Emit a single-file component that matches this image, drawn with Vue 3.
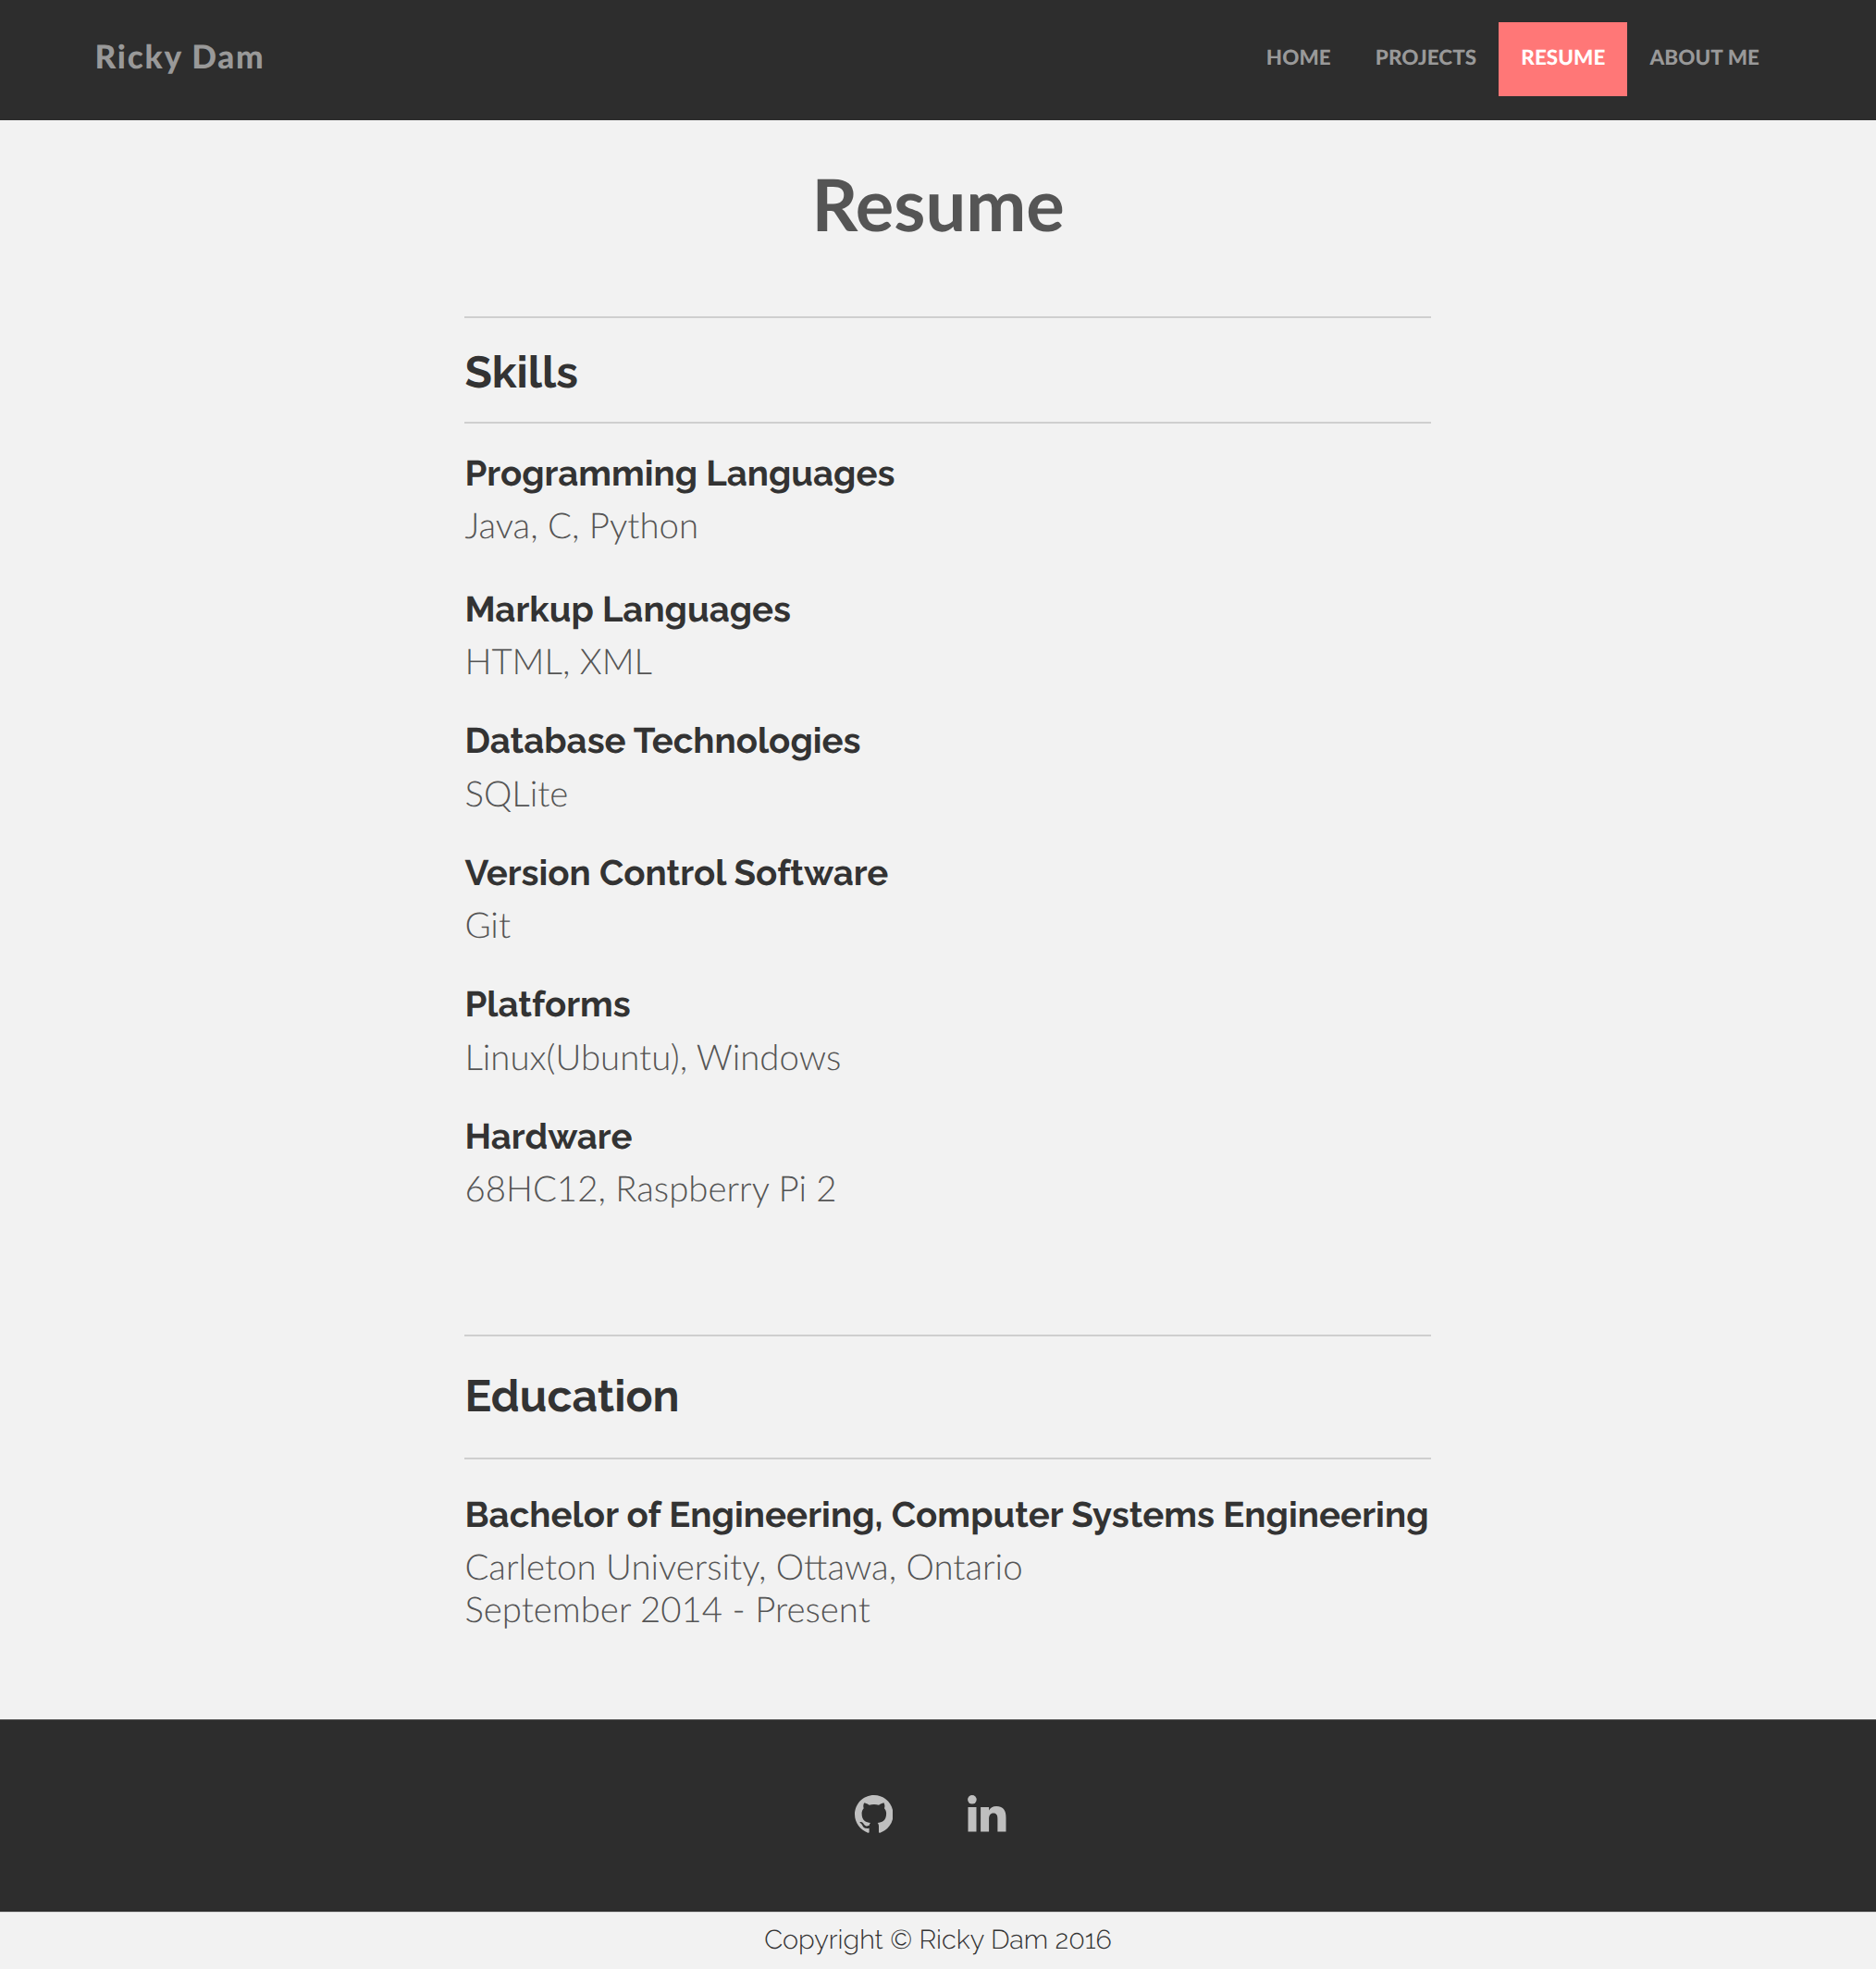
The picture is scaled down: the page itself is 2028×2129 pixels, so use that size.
<script setup>
const links = ['HOME', 'PROJECTS', 'RESUME', 'ABOUT ME']
const current = 'RESUME'
const skills = [
  { title: 'Programming Languages', detail: 'Java, C, Python' },
  { title: 'Markup Languages', detail: 'HTML, XML' },
  { title: 'Database Technologies', detail: 'SQLite' },
  { title: 'Version Control Software', detail: 'Git' },
  { title: 'Platforms', detail: 'Linux(Ubuntu), Windows' },
  { title: 'Hardware', detail: '68HC12, Raspberry Pi 2' },
]
</script>

<template>
  <div class="page">
    <header class="header">
      <a class="brand">Ricky Dam</a>
      <nav class="nav">
        <a v-for="link in links" :key="link" class="nav-link" :class="{ active: link === current }">{{ link }}</a>
      </nav>
    </header>

    <main class="content">
      <h1>Resume</h1>
      <section class="skills">
        <h2>Skills</h2>
        <div v-for="skill in skills" :key="skill.title" class="entry">
          <h3>{{ skill.title }}</h3>
          <p>{{ skill.detail }}</p>
        </div>
      </section>
      <section class="education">
        <h2>Education</h2>
        <div class="entry">
          <h3>Bachelor of Engineering, Computer Systems Engineering</h3>
          <p>Carleton University, Ottawa, Ontario<br />September 2014 - Present</p>
        </div>
      </section>
    </main>

    <footer>
      <div class="social">
        <a aria-label="GitHub">
          <svg class="github" viewBox="0 0 16 15.6" preserveAspectRatio="none">
            <path d="M8 0C3.58 0 0 3.58 0 8c0 3.54 2.29 6.53 5.47 7.59.4.07.55-.17.55-.38 0-.19-.01-.82-.01-1.49-2.01.37-2.53-.49-2.69-.94-.09-.23-.48-.94-.82-1.13-.28-.15-.68-.52-.01-.53.63-.01 1.08.58 1.23.82.72 1.21 1.87.87 2.33.66.07-.52.28-.87.51-1.07-1.78-.2-3.64-.89-3.64-3.95 0-.87.31-1.59.82-2.15-.08-.2-.36-1.02.08-2.12 0 0 .67-.21 2.2.82.64-.18 1.32-.27 2-.27s1.36.09 2 .27c1.53-1.04 2.2-.82 2.2-.82.44 1.1.16 1.92.08 2.12.51.56.82 1.27.82 2.15 0 3.07-1.87 3.75-3.65 3.95.29.25.54.73.54 1.48 0 1.07-.01 1.93-.01 2.2 0 .21.15.46.55.38A8.01 8.01 0 0 0 16 8c0-4.42-3.58-8-8-8z" />
          </svg>
        </a>
        <a aria-label="LinkedIn">
          <svg class="linkedin" viewBox="0 0 41.6 39.4">
            <circle cx="4.9" cy="4.8" r="4.8" />
            <path d="M.5 13h9v26.4h-9zM14.1 13h9v3.6c1.2-2.6 4.2-4.5 8-4.5 8 0 10.4 5 10.4 12.2v15.1h-9.1V25.8c0-3.9-1-6.2-4.5-6.2-3.3 0-4.8 2.4-4.8 6.2v13.6h-9z" />
          </svg>
        </a>
      </div>
      <div class="copyright">Copyright © Ricky Dam 2016</div>
    </footer>
  </div>
</template>

<style>
body { background: #f1f1f1; }
</style>

<style scoped>
.page {
  height: 2129px;
  overflow: hidden;
  background: #f2f2f2;
  color: #333;
  font-family: Lato, sans-serif;
  text-rendering: geometricPrecision;
}
.header {
  box-sizing: border-box;
  height: 130px;
  padding: 24px 102px 0 102.4px;
  display: flex;
  justify-content: space-between;
  background: #2d2d2d;
  color: #999;
  font-weight: 900;
}
.brand {
  padding-top: 15.2px;
  font-size: 35.2px;
  line-height: 44px;
  letter-spacing: 1.76px;
}
.nav { display: flex; height: 80px; }
.nav-link {
  padding: 0 24px;
  font-size: 22.4px;
  line-height: 76px;
  letter-spacing: 0.1px;
}
.nav-link.active { background: #ff7777; color: #fff; }

.content {
  width: 1044.8px;
  height: 1729px;
  margin-left: 502.4px;
}
h1, h2, h3, p { margin: 0; }
h1 {
  width: 1023.6px;
  padding-top: 39.8px;
  height: 172.2px;
  text-align: center;
  font-size: 77.7px;
  line-height: 100px;
  font-weight: 700;
  color: #555;
}
h2 {
  box-sizing: border-box;
  border-top: 2px solid #cfcfcf;
  border-bottom: 2px solid #cfcfcf;
  font: 700 48px/57.6px Raleway, Lato, sans-serif;
}
.skills { height: 1101px; }
.skills h2 { height: 116px; padding-top: 30.8px; margin-bottom: 30.8px; }
.education h2 { height: 135px; padding-top: 36.8px; margin-bottom: 37px; }
h3 {
  font: 700 38.4px/45px Raleway, Lato, sans-serif;
  white-space: nowrap;
}
.education h3 { letter-spacing: 0.05px; }
p {
  padding-top: 12.5px;
  font-size: 38.4px;
  line-height: 45.6px;
  font-weight: 300;
  color: #555;
}
.entry { margin-bottom: 39.3px; }
.skills .entry:nth-child(2) { margin-bottom: 44.1px; }

.social {
  box-sizing: border-box;
  height: 209px;
  padding: 81px 0 0 923.7px;
  display: flex;
  gap: 81.2px;
  background: #2d2d2d;
  border-top: 1px solid #505050;
  border-bottom: 1px solid #d4d4d4;
}
.social svg { display: block; fill: #bfbfbf; }
.github { width: 41.6px; height: 40.7px; }
.linkedin { width: 41.6px; height: 39.4px; margin-top: 0.2px; }
.copyright {
  padding-top: 12px;
  text-align: center;
  font: 300 28.8px/34px Raleway, Lato, sans-serif;
}
</style>
